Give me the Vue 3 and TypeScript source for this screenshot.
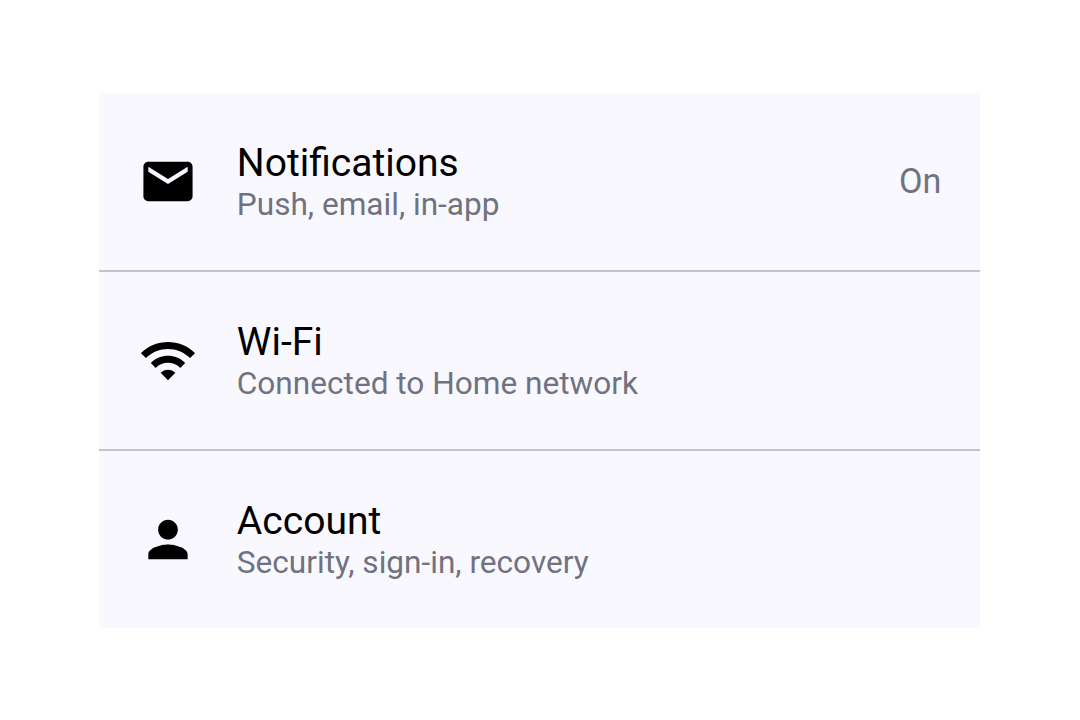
<script setup lang="ts">
interface Item {
  title: string
  detail: string
  value?: string
  icon: string
}

const items: Item[] = [
  {
    title: 'Notifications',
    detail: 'Push, email, in-app',
    value: 'On',
    icon: 'M20 4H4c-1.1 0-1.99.9-1.99 2L2 18c0 1.1.9 2 2 2h16c1.1 0 2-.9 2-2V6c0-1.1-.9-2-2-2zm0 4l-8 5-8-5V6l8 5 8-5v2z',
  },
  {
    title: 'Wi-Fi',
    detail: 'Connected to Home network',
    icon: 'M1 9l2 2c4.97-4.97 13.03-4.97 18 0l2-2C16.93 2.93 7.08 2.93 1 9zm8 8l3 3 3-3c-1.65-1.66-4.34-1.66-6 0zm-4-4l2 2c2.76-2.76 7.24-2.76 10 0l2-2C15.14 9.14 8.87 9.14 5 13z',
  },
  {
    title: 'Account',
    detail: 'Security, sign-in, recovery',
    icon: 'M12 12c2.21 0 4-1.79 4-4s-1.79-4-4-4-4 1.79-4 4 1.79 4 4 4zm0 2c-2.67 0-8 1.34-8 4v2h16v-2c0-2.66-5.33-4-8-4z',
  },
]
</script>

<template>
  <main class="page">
    <ul class="list">
      <li v-for="item in items" :key="item.title" class="row">
        <svg class="icon" viewBox="-0.2 0 24 24" aria-hidden="true"><path :d="item.icon" /></svg>
        <div class="text">
          <span class="title">{{ item.title }}</span>
          <span class="detail">{{ item.detail }}</span>
        </div>
        <span v-if="item.value" class="value">{{ item.value }}</span>
      </li>
    </ul>
  </main>
</template>

<style scoped>
.page {
  box-sizing: border-box;
  height: 720px;
  padding: 93px 99.6px 0 99.4px;
  background: #fff;
  font-family: Roboto, "Liberation Sans", sans-serif;
}
.list {
  margin: 0;
  padding: 0;
  list-style: none;
  background: #f9f8ff;
}
.row {
  box-sizing: border-box;
  display: flex;
  align-items: center;
  height: 179px;
  padding: 0 39px;
  border-bottom: 2px solid #c4c2ca;
}
.row:last-child {
  height: 177px;
  border-bottom: 0;
}
.icon {
  width: 59px;
  height: 59px;
  margin-right: 39.4px;
  fill: #000;
}
.text {
  display: flex;
  flex: 1;
  flex-direction: column;
  padding-top: 4px;
}
.title {
  font-size: 39.05px;
  line-height: 42px;
  color: #000;
}
.detail {
  font-size: 31.6px;
  line-height: 42px;
  color: #70737f;
}
.value {
  padding-bottom: 2px;
  font-size: 34.2px;
  color: #70737f;
}
</style>
